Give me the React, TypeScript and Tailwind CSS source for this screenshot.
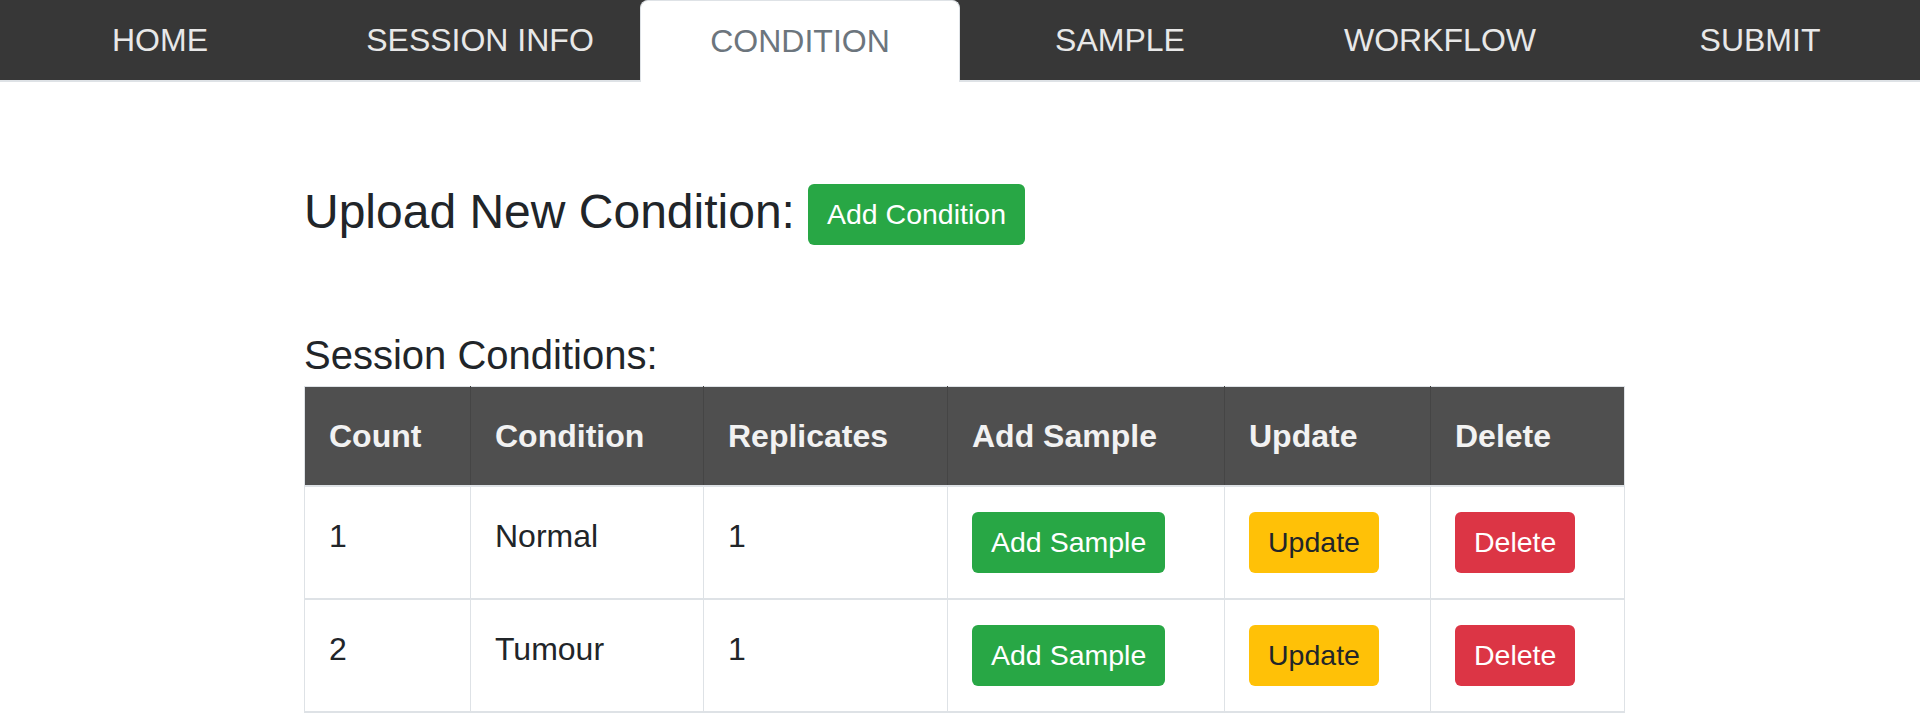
import React from 'react'

const tabs = ['HOME', 'SESSION INFO', 'CONDITION', 'SAMPLE', 'WORKFLOW', 'SUBMIT']

const conditions = [
  { count: 1, name: 'Normal', replicates: 1 },
  { count: 2, name: 'Tumour', replicates: 1 }
]

const headers = ['Count', 'Condition', 'Replicates', 'Add Sample', 'Update', 'Delete']
const widths = ['w-[166px]', 'w-[233px]', 'w-[244px]', 'w-[277px]', 'w-[206px]', 'w-[194px]']

const Btn = ({ color, children }: { color: string; children: React.ReactNode }) => (
  <button className={`inline-flex h-[61px] items-center rounded-[6px] px-[19px] text-[28.5px] leading-none ${color}`}>
    {children}
  </button>
)

export default function App() {
  return (
    <div className="min-h-[726px] bg-white font-['Liberation_Sans',Arial,sans-serif] text-[#212529]">
      <nav className="flex h-[82px] bg-[#373737]">
        {tabs.map((tab) =>
          tab === 'CONDITION' ? (
            <div
              key={tab}
              className="flex h-[82px] w-[320px] items-center justify-center rounded-t-[8px] border-x border-t border-[#dee2e6] bg-white pb-[2px] text-[32px] text-[#6c757d]"
            >
              {tab}
            </div>
          ) : (
            <div
              key={tab}
              className="flex h-[82px] w-[320px] items-center justify-center border-b-2 border-[#dee2e6] text-[32px] text-[#e8e8e8]"
            >
              {tab}
            </div>
          )
        )}
      </nav>

      <main className="ml-[304px] w-[1320px]">
        <div className="mt-[102px] flex items-center gap-[13px]">
          <h1 className="-mt-[6px] text-[48px] leading-[1.2]">Upload New Condition:</h1>
          <Btn color="bg-[#28a745] text-white">Add Condition</Btn>
        </div>

        <h2 className="mt-[86px] text-[40px] leading-[1.2]">Session Conditions:</h2>

        <table className="mt-[7px] w-[1320px] table-fixed border-collapse text-[32px]">
          <colgroup>
            {widths.map((w, i) => (
              <col key={i} className={w} />
            ))}
          </colgroup>
          <thead>
            <tr className="h-[99px] bg-[#4f4f4f] text-[#f2f2f2]">
              {headers.map((h) => (
                <th
                  key={h}
                  className="border-x border-t border-b-2 border-x-[#454545] border-t-[#dee2e6] border-b-[#dee2e6] px-6 text-left align-middle font-bold leading-[1.5] first:border-l-[#dee2e6] last:border-r-[#dee2e6]"
                >
                  {h}
                </th>
              ))}
            </tr>
          </thead>
          <tbody>
            {conditions.map((c) => (
              <tr key={c.count} className="h-[113px]">
                <td className="border border-b-2 border-[#dee2e6] px-6 pt-[25px] align-top leading-[1.5]">{c.count}</td>
                <td className="border border-b-2 border-[#dee2e6] px-6 pt-[25px] align-top leading-[1.5]">{c.name}</td>
                <td className="border border-b-2 border-[#dee2e6] px-6 pt-[25px] align-top leading-[1.5]">{c.replicates}</td>
                <td className="border border-b-2 border-[#dee2e6] px-6 pt-[25px] align-top">
                  <Btn color="bg-[#28a745] text-white">Add Sample</Btn>
                </td>
                <td className="border border-b-2 border-[#dee2e6] px-6 pt-[25px] align-top">
                  <Btn color="bg-[#ffc107] text-[#212529]">Update</Btn>
                </td>
                <td className="border border-b-2 border-[#dee2e6] px-6 pt-[25px] align-top">
                  <Btn color="bg-[#dc3545] text-white">Delete</Btn>
                </td>
              </tr>
            ))}
          </tbody>
        </table>
      </main>
    </div>
  )
}
